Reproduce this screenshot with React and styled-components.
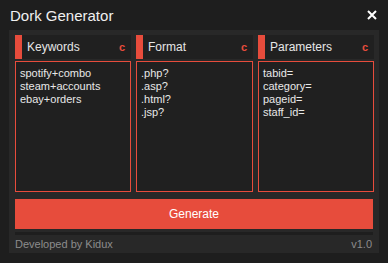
import React from "react";
import styled, { createGlobalStyle } from "styled-components";

const GlobalStyle = createGlobalStyle`
  html, body {
    margin: 0;
    padding: 0;
    background: #1e1e1e;
    font-family: "Liberation Sans", Arial, sans-serif;
  }
`;

const Window = styled.div`
  width: 388px;
  height: 263px;
  background: #1e1e1e;
  display: flex;
  flex-direction: column;
`;

const TitleBar = styled.div`
  height: 30px;
  display: flex;
  align-items: center;
  justify-content: space-between;
  padding: 0 10px;
  box-sizing: border-box;
`;

const Title = styled.h1`
  margin: 0;
  font-size: 15px;
  font-weight: 400;
  color: #f0f0f0;
  padding-top: 1px;
`;

const Close = styled.div`
  display: flex;
  width: 10px;
  height: 10px;
  margin-right: 1px;
  margin-bottom: 1px;
  svg {
    display: block;
  }
`;

const Panel = styled.div`
  margin: 0 9px;
  background: #282828;
  padding: 5px 6px 0 6px;
  height: 223px;
  box-sizing: border-box;
  display: flex;
  flex-direction: column;
`;

const Columns = styled.div`
  display: grid;
  grid-template-columns: 116px 117px 116px;
  gap: 5px;
`;

const Column = styled.div`
  display: flex;
  flex-direction: column;
`;

const Header = styled.div`
  height: 24px;
  background: #202020;
  display: flex;
  align-items: center;
  padding-right: 6px;
`;

const Bar = styled.span`
  width: 7px;
  height: 24px;
  background: #e74c3c;
  margin-right: 5px;
`;

const Label = styled.span`
  flex: 1;
  font-size: 12px;
  color: #e6e6e6;
`;

const Clear = styled.span`
  font-size: 11px;
  font-weight: 700;
  color: #e74c3c;
`;

const Box = styled.div`
  margin-top: 2px;
  height: 131px;
  box-sizing: border-box;
  border: 1px solid #e74c3c;
  background: #202020;
  padding: 5px 4px;
  font-size: 11px;
  line-height: 13px;
  color: #e8e8e8;
  white-space: pre;
`;

const Button = styled.button`
  margin-top: 7px;
  height: 30px;
  width: 358px;
  border: none;
  background: #e74c3c;
  color: #ffffff;
  font-family: "Liberation Sans", Arial, sans-serif;
  font-size: 12px;
  padding: 0;
`;

const Divider = styled.div`
  margin-top: 3px;
  height: 3px;
  background: #1e1e1e;
  width: 358px;
`;

const Footer = styled.div`
  flex: 1;
  display: flex;
  align-items: center;
  justify-content: space-between;
  padding-right: 1px;
  font-size: 11px;
  color: #8c8c8c;
`;

const columns = [
  { label: "Keywords", text: "spotify+combo\nsteam+accounts\nebay+orders" },
  { label: "Format", text: ".php?\n.asp?\n.html?\n.jsp?" },
  { label: "Parameters", text: "tabid=\ncategory=\npageid=\nstaff_id=" },
];

export default function App() {
  return (
    <>
      <GlobalStyle />
      <Window>
        <TitleBar>
          <Title>Dork Generator</Title>
          <Close>
            <svg width="10" height="10" viewBox="0 0 10 10">
              <path d="M1 1 L9 9 M9 1 L1 9" stroke="#ffffff" strokeWidth="2" />
            </svg>
          </Close>
        </TitleBar>
        <Panel>
          <Columns>
            {columns.map((c) => (
              <Column key={c.label}>
                <Header>
                  <Bar />
                  <Label>{c.label}</Label>
                  <Clear>c</Clear>
                </Header>
                <Box>{c.text}</Box>
              </Column>
            ))}
          </Columns>
          <Button>Generate</Button>
          <Divider />
          <Footer>
            <span>Developed by Kidux</span>
            <span>v1.0</span>
          </Footer>
        </Panel>
      </Window>
    </>
  );
}
